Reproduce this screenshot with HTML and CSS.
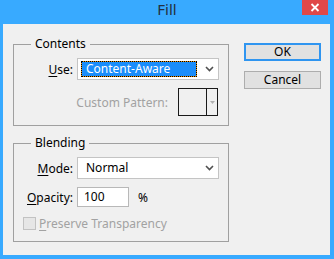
FILE: index.html
```html
<!DOCTYPE html>
<html>
<head>
<meta charset="utf-8">
<link rel="stylesheet" href="styles.css">
</head>
<body>
<div class="window">
  <div class="titlebar">
    <span class="title">Fill</span>
    <button class="close" aria-label="Close">
      <svg width="10" height="9" viewBox="0 0 10 9"><path d="M1.5 1 L8.5 8 M8.5 1 L1.5 8" stroke="#fff" stroke-width="1.8" fill="none"/></svg>
    </button>
  </div>
  <div class="client">
    <div class="groups">
      <section class="group">
        <h2 class="group-title">Contents</h2>
        <div class="row">
          <label class="lbl"><u>U</u>se:</label>
          <div class="select">
            <span class="sel-text focused">Content-Aware</span>
            <svg class="chev" width="9" height="6" viewBox="0 0 9 6"><path d="M1 1 L4.5 4.5 L8 1" stroke="#505050" stroke-width="1.6" fill="none"/></svg>
          </div>
        </div>
        <div class="row row-pattern">
          <span class="lbl-free disabled">Custom Pattern:</span>
          <div class="pattern">
            <div class="swatch"></div>
            <div class="pat-arrow"><svg width="5" height="3" viewBox="0 0 5 3"><path d="M0 0 H5 L2.5 3 Z" fill="#b0b0b0"/></svg></div>
          </div>
        </div>
      </section>
      <section class="group">
        <h2 class="group-title">Blending</h2>
        <div class="row">
          <label class="lbl"><u>M</u>ode:</label>
          <div class="select">
            <span class="sel-text">Normal</span>
            <svg class="chev" width="9" height="6" viewBox="0 0 9 6"><path d="M1 1 L4.5 4.5 L8 1" stroke="#505050" stroke-width="1.6" fill="none"/></svg>
          </div>
        </div>
        <div class="row row-opacity">
          <label class="lbl"><u>O</u>pacity:</label>
          <div class="input">100</div>
          <span class="pct">%</span>
        </div>
        <div class="row row-check">
          <span class="checkbox"></span>
          <span class="disabled"><u>P</u>reserve Transparency</span>
        </div>
      </section>
    </div>
    <div class="buttons">
      <button class="btn default">OK</button>
      <button class="btn">Cancel</button>
    </div>
  </div>
</div>
</body>
</html>
```
FILE: styles.css
```css
* { box-sizing: border-box; }
html, body { margin: 0; padding: 0; }
body {
  width: 334px;
  height: 259px;
  overflow: hidden;
  font-family: "Noto Sans", "Open Sans", sans-serif;
  font-size: 12px;
  color: #000;
}
.window {
  width: 334px;
  height: 259px;
  background: #38aaff;
  display: flex;
  flex-direction: column;
}
.titlebar {
  height: 24px;
  display: grid;
  grid-template-columns: 1fr auto 1fr;
  align-items: start;
}
.title {
  grid-column: 2;
  font-size: 15px;
  line-height: 19px;
  color: #233040;
}
.close {
  grid-column: 3;
  justify-self: end;
  margin: 0 6px 0 0;
  width: 26px;
  height: 15px;
  border: 0;
  padding: 0;
  background: #e04848;
  display: flex;
  align-items: center;
  justify-content: center;
}
.client {
  flex: 1;
  margin: 0 4px 4px 3px;
  background: #f0f0f0;
  display: flex;
  padding: 19px 0 0 10px;
  gap: 15px;
}
.groups {
  display: flex;
  flex-direction: column;
  gap: 17px;
  margin-top: 1px;
  width: 216px;
}
.group {
  position: relative;
  border: 1px solid #a0a0a0;
  padding: 13px 0 9px 0;
  display: flex;
  flex-direction: column;
  gap: 8px;
}
.group-title {
  position: absolute;
  top: -9px;
  left: 17px;
  margin: 0;
  padding: 0 4px;
  background: #f0f0f0;
  font-size: 12px;
  font-weight: normal;
  line-height: 16px;
}
.row {
  display: flex;
  align-items: center;
}
.lbl {
  width: 59px;
  margin-right: 4px;
  text-align: right;
  flex: none;
}
u { text-decoration-thickness: 1px; text-underline-offset: 2px; }
.select {
  width: 142px;
  height: 22px;
  background: #fff;
  border: 1px solid #c4c4c4;
  display: flex;
  align-items: center;
  padding: 2px 4px 2px 3px;
}
.sel-text {
  flex: 1;
  height: 16px;
  line-height: 14px;
  padding-left: 4px;
  border: 1px solid transparent;
}
.sel-text.focused {
  color: #fff;
  border: 1px dotted #000;
  background: linear-gradient(#1a8dfb, #1a8dfb) padding-box, #e8900a border-box;
  flex: none;
  width: 116px;
}
.chev { margin-left: auto; flex: none; }
.row-pattern {
  justify-content: flex-end;
  padding-right: 10px;
}
.lbl-free { margin-right: 10px; }
.disabled { color: #a2a2a2; }
.pattern {
  width: 40px;
  height: 28px;
  border: 1px solid #1a1a1a;
  display: flex;
}
.swatch {
  width: 28px;
  border-right: 1px solid #1a1a1a;
}
.pat-arrow {
  flex: 1;
  display: flex;
  align-items: center;
  justify-content: center;
}
.input {
  width: 52px;
  height: 20px;
  background: #fff;
  border: 1px solid #b8b8b8;
  padding-left: 6px;
  line-height: 18px;
}
.pct { margin-left: 9px; }
.row-check { padding-left: 9px; }
.checkbox {
  width: 13px;
  height: 13px;
  border: 1px solid #c2c2c2;
  background: #e6e6e6;
  margin-right: 3px;
}
.buttons {
  display: flex;
  flex-direction: column;
  gap: 10px;
}
.btn {
  width: 77px;
  height: 18px;
  padding: 0;
  font-family: inherit;
  font-size: 12px;
  line-height: 14px;
  color: #000;
  background: #e1e1e1;
  border: 1px solid #adadad;
}
.btn.default {
  border: 1px solid #2f95f0;
  box-shadow: inset 0 0 0 1px #2f95f0;
}
```
